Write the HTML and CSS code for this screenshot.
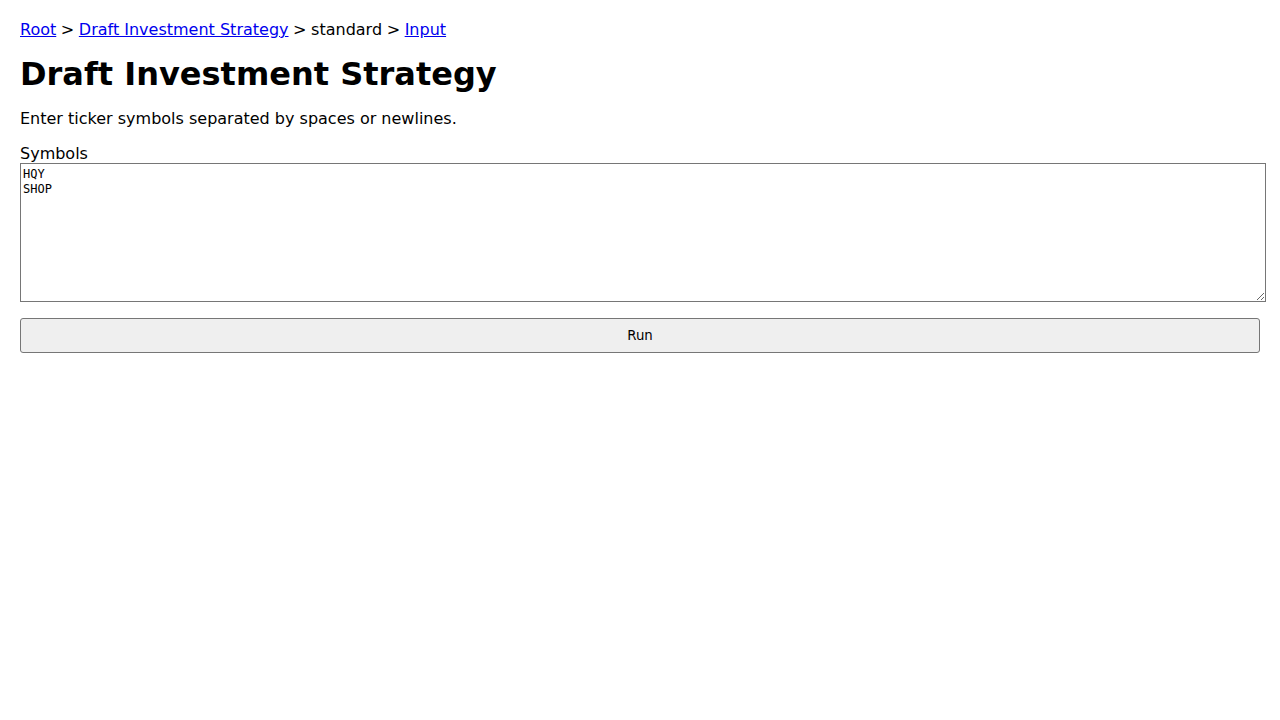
FILE: index.html
```html
<!DOCTYPE html>
<html lang="en">
<head>
<meta charset="utf-8">
<title>Draft Investment Strategy</title>
<link rel="stylesheet" href="styles.css">
</head>
<body>
<main class="page">
  <nav class="crumbs"><a href="#">Root</a> &gt; <a href="#">Draft Investment Strategy</a> &gt; standard &gt; <a href="#">Input</a></nav>
  <h1 class="title">Draft Investment Strategy</h1>
  <p class="hint">Enter ticker symbols separated by spaces or newlines.</p>
  <label class="field-label" for="symbols">Symbols</label>
  <textarea class="symbols" id="symbols">HQY
SHOP</textarea>
  <button class="run" type="button">Run</button>
</main>
<div class="output"></div>
</body>
</html>
```
FILE: styles.css
```css
html, body {
  background: #ffffff;
}
body {
  margin: 8px 8px 0 8px;
  font-family: "DejaVu Sans", "Noto Sans", sans-serif;
  font-size: 16px;
  color: #000000;
}
.page {
  padding: 12px 12px 0 12px;
}
.crumbs {
  line-height: 19px;
  height: 19px;
  word-spacing: -0.5px;
}
.crumbs a {
  color: #0000ee;
  text-decoration: underline;
  word-spacing: 0;
}
.title {
  margin: 17px 0 0 0;
  font-size: 32px;
  font-weight: bold;
  line-height: 37px;
}
.hint {
  margin: 16px 0 0 0;
  line-height: 19px;
}
.field-label {
  display: block;
  margin-top: 16px;
  line-height: 19px;
}
.symbols {
  display: block;
  box-sizing: content-box;
  width: 100%;
  height: 133px;
  margin: 0;
  padding: 3px 2px 1px 2px;
  border: 1px solid #767676;
  font-family: "DejaVu Sans Mono", monospace;
  font-size: 12px;
  line-height: 15px;
  color: #000000;
  background: #ffffff;
}
.run {
  display: block;
  box-sizing: border-box;
  width: 100%;
  height: 35px;
  margin-top: 16px;
  padding: 0;
  border: 1px solid #767676;
  border-radius: 3px;
  background: #efefef;
  font-family: "DejaVu Sans", sans-serif;
  font-size: 13.33px;
  color: #000000;
}
.output {
  margin: 24px 12px 0 0;
  height: 400px;
}
```
